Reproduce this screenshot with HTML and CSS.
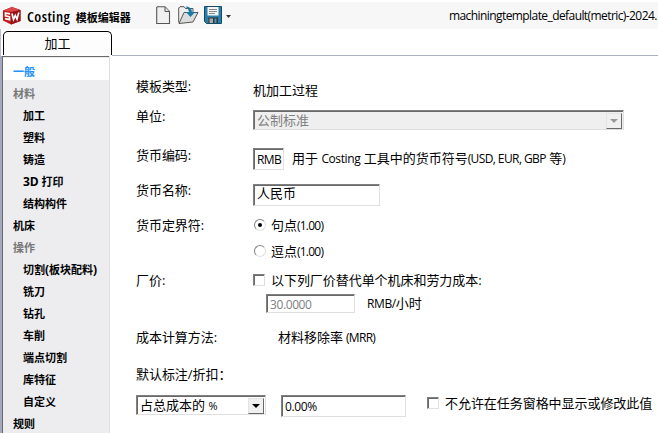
FILE: index.html
```html
<!DOCTYPE html>
<html lang="zh-CN">
<head>
<meta charset="utf-8">
<title>Costing 模板编辑器</title>
<link rel="stylesheet" href="styles.css">
</head>
<body>
<header class="titlebar">
  <svg class="logo" width="18" height="18" viewBox="0 0 18 18"><path d="M0 3.500 9 0 17.500 3V14L8 17.500 0 13.500Z" fill="#c0181c"/><path d="M0 3.500 9 0 17.500 3 8.500 5Z" fill="#d9474b"/><path d="M8.500 5 17.500 3V14L8 17.500Z" fill="#981216"/><path d="M7 6.800 2.500 6V8.800L6.500 9.800V12.700L2 11.700" fill="none" stroke="#fff" stroke-width="1.700"/><path d="M9 6.500 10.500 12.500 12.300 8.500 14 12 15.800 5.500" fill="none" stroke="#fff" stroke-width="1.700"/></svg>
  <h1 class="app-title"><span class="app-name">Costing</span> 模板编辑器</h1>
  <svg class="icon-new" width="15" height="19" viewBox="0 0 15 19"><path d="M1.500.700H9L13.500 5.500V17.500H.700V1.500Z" fill="#f0f0f0" stroke="#555" stroke-width="1.100"/><path d="M9 1V5.500H13.500" fill="#ddd" stroke="#555"/></svg>
  <svg class="icon-open" width="21" height="19" viewBox="0 0 21 19"><path d="M.7 16.500V2L2 .700H6L7.500 2.500H15V6" fill="#eee" stroke="#555"/><path d="M1 17.500 6 6.500H20L15 16Z" fill="#dcdcdc" stroke="#555"/><path d="M7.500.500Q13.500.500 14 6H17L12.500 11 8 6H11Q10.500 2.500 7.500.500Z" fill="#1679a8"/></svg>
  <svg class="icon-save" width="18" height="18" viewBox="0 0 18 18"><path d="M.5.500H17.500V17.500H2.500L.5 15.500Z" fill="#2a7fa8" stroke="#144a66"/><path d="M3.500 1H14.500V9.500H3.500Z" fill="#f5f5f5"/><path d="M5 3.500H13M5 5.500H13M5 7.500H11" stroke="#888"/><path d="M4.500 11.500H14V17H4.500Z" fill="#333"/><path d="M5.500 12.500H9V17H5.500Z" fill="#aaa"/><path d="M10.500 12.500H12.500V17H10.500Z" fill="#3c9ac4"/></svg>
  <svg class="icon-more" width="5" height="3" viewBox="0 0 5 3"><path d="M0 0H5L2.500 3Z" fill="#333"/></svg>
  <div class="filename">machiningtemplate_default(metric)-2024.</div>
</header>
<nav class="tabs"><div class="tab">加工</div><div class="tab-line"></div></nav>
<main class="body">
  <ul class="sidebar">
    <li class="item selected">一般</li>
    <li class="item group">材料</li>
    <li class="item sub">加工</li>
    <li class="item sub">塑料</li>
    <li class="item sub">铸造</li>
    <li class="item sub"><span class="dim">3D</span> 打印</li>
    <li class="item sub">结构构件</li>
    <li class="item">机床</li>
    <li class="item group">操作</li>
    <li class="item sub">切割<span class="paren">(</span>板块配料<span class="paren">)</span></li>
    <li class="item sub">铣刀</li>
    <li class="item sub">钻孔</li>
    <li class="item sub">车削</li>
    <li class="item sub">端点切割</li>
    <li class="item sub">库特征</li>
    <li class="item sub">自定义</li>
    <li class="item">规则</li>
  </ul>
  <form class="form">
    <div class="row r-type"><label class="label">模板类型:</label><span class="value v-type">机加工过程</span></div>
    <div class="row r-unit"><label class="label">单位:</label><div class="select disabled unit"><span>公制标准</span><i class="arrow"></i></div></div>
    <div class="row r-code"><label class="label">货币编码:</label><div class="field code"><span class="latin rmb">RMB</span></div><span class="value v-code">用于 <span class="latin">Costing</span> 工具中的货币符号<span class="latin codes">(USD, EUR, GBP</span> 等<span class="latin">)</span></span></div>
    <div class="row r-name"><label class="label">货币名称:</label><div class="field name">人民币</div></div>
    <div class="row r-delim"><label class="label">货币定界符:</label><i class="radio on"></i><span class="choice">句点<span class="latin num">(1.00)</span></span></div>
    <div class="row r-comma"><label class="label"></label><i class="radio"></i><span class="choice">逗点<span class="latin num">(1.00)</span></span></div>
    <div class="row r-shop"><label class="label">厂价:</label><i class="check"></i><span class="choice">以下列厂价替代单个机床和劳力成本:</span></div>
    <div class="row r-rate"><div class="field rate"><span class="latin">30.0000</span></div><span class="value v-rate"><span class="latin">RMB/</span>小时</span></div>
    <div class="row r-method"><label class="label">成本计算方法:</label><span class="value v-method">材料移除率<span class="latin mrr">(MRR)</span></span></div>
    <div class="row r-markup"><label class="label">默认标注/折扣：</label></div>
    <div class="row r-bottom"><div class="select percent"><span>占总成本的 <span class="latin pct">%</span></span><i class="arrow"></i></div><div class="field zero"><span class="latin">0.00%</span></div><i class="check hide"></i><span class="choice c-hide">不允许在任务窗格中显示或修改此值</span></div>
  </form>
</main>
</body>
</html>
```
FILE: styles.css
```css
* { box-sizing: border-box; }
body { margin: 0; width: 658px; height: 433px; overflow: hidden; background: #fff; color: #000; font: 13px/18px "Open Sans", "Noto Sans CJK SC", sans-serif; white-space: nowrap; }
svg { display: block; flex: none; }
.latin { font-size: 12px; letter-spacing: -.4px; }
.titlebar { display: flex; height: 27px; margin-top: 2px; background: #f7f7f7; padding-left: 3px; }
.logo { margin-top: 5px; }
.app-title { flex: none; margin: 4px 0 0 6px; width: 129px; font: bold 11px/20px "Open Sans", "Noto Sans CJK SC", sans-serif; }
.app-name { display: inline-block; width: 46px; font-size: 15px; font-weight: 650; font-stretch: 85%; letter-spacing: .4px; }
.icon-new { margin-top: 4px; }
.icon-open { margin: 4px 0 0 7px; }
.icon-save { margin: 4px 0 0 5px; }
.icon-more { margin: 13px 0 0 4px; }
.filename { margin: 5px 0 0 218px; font-size: 12px; letter-spacing: -.58px; }
.tabs { display: flex; height: 27px; padding: 2px 0 0 3px; border-left: 1px solid #b9bfd0; }
.tab { width: 109px; height: 24px; margin-left: -1px; border: 1px solid #000; border-bottom: 0; border-radius: 5px 5px 0 0; background: #fdfdfd; text-align: center; line-height: 23px; }
.tab-line { flex: 1; height: 25px; border-bottom: 1px solid #a9b3bf; }
.body { display: flex; height: 377px; }
.sidebar { width: 110px; height: 377px; overflow: hidden; margin: 0; padding: 2px 0 0; border-left: 2px solid #a5a9c0; box-shadow: inset 1px 1px #696969; background: #ededf0; border-right: 1px solid #dedee0; list-style: none; font: bold 11px/22px "Open Sans", "Noto Sans CJK SC", sans-serif; }
.item { height: 22px; margin-left: 1px; padding: 3px 0 0 10px; line-height: 22px; }
.item.selected { background: #fff; color: #1e90ff; }
.item.group { color: #787878; }
.item.sub { padding-left: 20px; }
.dim { font-size: 12px; }
.paren { font-size: 12px; }
.form { flex: 1; padding-left: 26px; }
.row { display: flex; align-items: flex-start; height: 18px; }
.label { width: 117px; flex: none; letter-spacing: -.05px; }
.field, .select { height: 22px; flex: none; border: 1px solid; border-color: #808080 #dfdfdf #dfdfdf #808080; box-shadow: inset 1px 1px #696969; padding: 1px 0 0 3px; }
.select { display: flex; height: 20px; padding: 0 2px 0 3px; justify-content: space-between; }
.disabled { background: #efefef; color: #808080; }
.arrow { width: 16px; height: 16px; margin: 2px -1px 0 0; background: #f0f0f0; border: 1px solid; border-color: #e3e3e3 #696969 #696969 #e3e3e3; display: flex; align-items: center; justify-content: center; }
.arrow::before { content: ""; border: 4px solid transparent; border-top-color: #000; border-bottom: 0; }
.disabled .arrow::before { border-top-color: #999; }
.radio, .check { width: 12px; height: 12px; flex: none; border: 1px solid; border-color: #808080 #dfdfdf #dfdfdf #808080; margin-top: 3px; }
.radio { margin: 3px -1px 0 1px; border-radius: 50%; display: flex; align-items: center; justify-content: center; }
.radio.on::before { content: ""; width: 4px; height: 4px; border-radius: 50%; background: #000; }
.check { box-shadow: inset 1px 1px #696969; }
.choice { margin-left: 6px; letter-spacing: -.05px; }
.num { letter-spacing: -.75px; }
.r-type { margin-top: 21px; }
.v-type { margin-top: 4px; }
.r-unit { margin-top: 12px; }
.unit { width: 371px; margin-top: 3px; }
.r-code { margin-top: 21px; }
.code { width: 31px; margin-top: 2px; }
.rmb { letter-spacing: -.6px; }
.v-code { margin: 3px 0 0 8px; }
.codes { letter-spacing: -.6px; }
.r-name { margin-top: 17px; }
.name { width: 127px; margin-top: 3px; padding-top: 0; }
.name { line-height: 17px; }
.r-delim { margin-top: 17px; }
.r-comma { margin-top: 8px; }
.r-shop { margin-top: 11px; }
.r-rate { margin-top: 5px; padding-left: 130px; }
.rate { width: 89px; height: 19px; padding-top: 0; color: #808080; }
.v-rate { margin-left: 12px; }
.r-method { margin-top: 16px; }
.v-method { margin-left: 25px; }
.mrr { margin-left: 3px; letter-spacing: -.7px; }
.r-markup { margin-top: 19px; }
.r-bottom { margin-top: 12px; }
.percent { width: 130px; }
.pct { font-size: 11px; }
.zero { width: 125px; margin-left: 15px; }
.hide { margin: 2px 0 0 21px; }
.c-hide { margin-top: -1px; }
```
